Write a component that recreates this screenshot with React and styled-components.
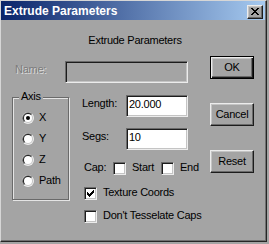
import React from "react";
import styled, { createGlobalStyle, css } from "styled-components";

const C = {
  face: "#a4a4a4",
  hi: "#ececec",
  light: "#c4c4c4",
  shadow: "#6a6a6a",
  dark: "#1c1c1c",
};

const GlobalStyle = createGlobalStyle`
  html, body { margin: 0; padding: 0; background: ${C.face}; }
  body {
    font-family: "Liberation Sans", Arial, sans-serif;
    font-size: 11px;
    letter-spacing: -0.25px;
    color: #000;
  }
  * { box-sizing: border-box; }
`;

const Window = styled.div`
  width: 267px;
  height: 242px;
  border: 1px solid;
  border-color: #d6d6d6 #262626 #262626 #d6d6d6;
  padding: 0 1px 1px 0;
  box-shadow: inset -1px -1px 0 #707070;
  background: ${C.face};
  display: flex;
  flex-direction: column;
`;

const TitleBar = styled.div`
  height: 19px;
  flex: none;
  display: flex;
  align-items: flex-start;
  padding-left: 3px;
  background: linear-gradient(to right, #0a246a, #a6caf0);
  color: #fff;
`;

const TitleText = styled.div`
  flex: 1;
  font-weight: bold;
  font-size: 12px;
  line-height: 20px;
  letter-spacing: 0;
  white-space: nowrap;
`;

const bevel = css`
  border: 1px solid;
  border-color: ${C.hi} ${C.dark} ${C.dark} ${C.hi};
  box-shadow: inset -1px -1px 0 ${C.shadow}, inset 1px 1px 0 ${C.light};
  background: ${C.face};
`;

const CloseButton = styled.div`
  ${bevel};
  width: 16px;
  height: 14px;
  margin-top: 4px;
  margin-right: 2px;
  display: flex;
  align-items: center;
  justify-content: center;
  padding-bottom: 1px;
`;

const Content = styled.div`
  flex: 1;
  padding-top: 14px;
`;

const Heading = styled.div`
  text-align: center;
  line-height: 13px;
  padding-left: 4px;
`;

const MainRow = styled.div`
  display: flex;
  align-items: flex-start;
  margin-top: 9px;
  padding-left: 11px;
`;

const LeftPart = styled.div`
  width: 176px;
  flex: none;
  display: flex;
  flex-direction: column;
`;

const NameRow = styled.div`
  display: flex;
  align-items: flex-start;
  margin-top: 5px;
`;

const NameLabel = styled.div`
  width: 53px;
  flex: none;
  padding: 2px 0 0 3px;
  line-height: 13px;
  color: #7c7c7c;
  text-shadow: 1px 1px 0 #dcdcdc;
`;

const Field = styled.div`
  width: ${(p) => p.$w}px;
  flex: none;
  height: 22px;
  border: 1px solid;
  border-color: ${C.shadow} ${C.hi} ${C.hi} ${C.shadow};
  box-shadow: inset 1px 1px 0 ${C.dark}, inset -1px -1px 0 ${C.light};
  background: ${(p) => (p.$disabled ? C.face : "#fff")};
  padding: 2px 0 0 2px;
  line-height: 13px;
  white-space: nowrap;
  overflow: hidden;
`;

const ButtonCol = styled.div`
  margin-left: 22px;
  width: 44px;
  flex: none;
  display: flex;
  flex-direction: column;
  gap: 24px;
`;

const Button = styled.div`
  width: 44px;
  height: 23px;
  display: flex;
  align-items: center;
  justify-content: center;
  padding-bottom: 1px;
  line-height: 13px;
  ${(p) =>
    p.$default
      ? css`
          border: 1px solid #000;
          background: ${C.face};
          box-shadow: inset 1px 1px 0 ${C.hi}, inset -1px -1px 0 ${C.dark},
            inset -2px -2px 0 ${C.shadow}, inset 2px 2px 0 ${C.light};
        `
      : bevel}
`;

const LowerRow = styled.div`
  display: flex;
  align-items: flex-start;
`;

const Group = styled.div`
  position: relative;
  flex: none;
  width: 57px;
  height: 103px;
  margin-top: 14px;
  border: 1px solid ${C.shadow};
  box-shadow: inset 1px 1px 0 #e4e4e4, 1px 1px 0 #e4e4e4;
  padding: 9px 0 0 9px;
`;

const Legend = styled.div`
  position: absolute;
  top: -8px;
  left: 6px;
  padding: 0 2px;
  background: ${C.face};
  line-height: 13px;
`;

const RadioRow = styled.div`
  display: flex;
  align-items: center;
  gap: 5px;
  height: 21px;
  line-height: 13px;
`;

const Fields = styled.div`
  flex: none;
  width: 106px;
  margin-left: 13px;
  margin-top: 12px;
  display: flex;
  flex-direction: column;
`;

const FieldRow = styled.div`
  display: flex;
  align-items: flex-start;
  margin-top: ${(p) => p.$mt || 0}px;
`;

const FieldLabel = styled.div`
  width: 44px;
  flex: none;
  padding-top: 2px;
  line-height: 13px;
`;

const CheckRow = styled.div`
  display: flex;
  align-items: center;
  height: 13px;
  padding-left: 2px;
  margin-top: ${(p) => p.$mt}px;
`;

const CheckText = styled.span`
  flex: none;
  line-height: 13px;
  margin-bottom: 2px;
  margin-left: ${(p) => p.$ml || 0}px;
  width: ${(p) => (p.$w ? `${p.$w}px` : "auto")};
  white-space: nowrap;
`;

const Box = styled.span`
  flex: none;
  width: 13px;
  height: 13px;
  border: 1px solid;
  border-color: ${C.shadow} ${C.hi} ${C.hi} ${C.shadow};
  box-shadow: inset 1px 1px 0 ${C.dark}, inset -1px -1px 0 ${C.light};
  background: #fff;
  display: flex;
  align-items: center;
  justify-content: center;
`;

function Checkbox({ checked }) {
  return (
    <Box>
      {checked && (
        <svg width="7" height="7" viewBox="0 0 7 7" shapeRendering="crispEdges">
          <path
            d="M6 0h1v1H6zM5 1h2v1H5zM0 2h1v1H0zM4 2h3v1H4zM0 3h2v1H0zM3 3h3v1H3zM0 4h5v1H0zM1 5h3v1H1zM2 6h1v1H2z"
            fill="#000"
          />
        </svg>
      )}
    </Box>
  );
}

function Radio({ checked }) {
  return (
    <svg width="12" height="12" viewBox="0 0 12 12" style={{ flex: "none" }}>
      <circle cx="6" cy="6" r="6" fill={C.hi} />
      <path d="M1.76 10.24 A6 6 0 0 1 10.24 1.76 Z" fill={C.shadow} />
      <circle cx="6" cy="6" r="5" fill={C.light} />
      <path d="M2.46 9.54 A5 5 0 0 1 9.54 2.46 Z" fill={C.dark} />
      <circle cx="6" cy="6" r="4" fill="#fff" />
      {checked && <circle cx="6" cy="6" r="2" fill="#000" />}
    </svg>
  );
}

function CloseGlyph() {
  return (
    <svg width="8" height="7" viewBox="0 0 8 7" shapeRendering="crispEdges">
      <path
        d="M0 0h2v1H0zM6 0h2v1H6zM1 1h2v1H1zM5 1h2v1H5zM2 2h4v1H2zM3 3h2v1H3zM2 4h4v1H2zM1 5h2v1H1zM5 5h2v1H5zM0 6h2v1H0zM6 6h2v1H6z"
        fill="#000"
      />
    </svg>
  );
}

const axes = ["X", "Y", "Z", "Path"];

export default function App() {
  return (
    <>
      <GlobalStyle />
      <Window>
        <TitleBar>
          <TitleText>Extrude Parameters</TitleText>
          <CloseButton>
            <CloseGlyph />
          </CloseButton>
        </TitleBar>
        <Content>
          <Heading>Extrude Parameters</Heading>
          <MainRow>
            <LeftPart>
              <NameRow>
                <NameLabel>Name:</NameLabel>
                <Field $w={123} $disabled />
              </NameRow>
              <LowerRow>
                <Group>
                  <Legend>Axis</Legend>
                  {axes.map((a, i) => (
                    <RadioRow key={a}>
                      <Radio checked={i === 0} />
                      <span>{a}</span>
                    </RadioRow>
                  ))}
                </Group>
                <Fields>
                  <FieldRow>
                    <FieldLabel>Length:</FieldLabel>
                    <Field $w={62}>20.000</Field>
                  </FieldRow>
                  <FieldRow $mt={11}>
                    <FieldLabel>Segs:</FieldLabel>
                    <Field $w={62}>10</Field>
                  </FieldRow>
                  <CheckRow $mt={12}>
                    <CheckText $w={29}>Cap:</CheckText>
                    <Checkbox />
                    <CheckText $ml={6} $w={29}>Start</CheckText>
                    <Checkbox />
                    <CheckText $ml={6}>End</CheckText>
                  </CheckRow>
                  <CheckRow $mt={12}>
                    <Checkbox checked />
                    <CheckText $ml={6}>Texture Coords</CheckText>
                  </CheckRow>
                  <CheckRow $mt={10}>
                    <Checkbox />
                    <CheckText $ml={6}>Don't Tesselate Caps</CheckText>
                  </CheckRow>
                </Fields>
              </LowerRow>
            </LeftPart>
            <ButtonCol>
              <Button $default>OK</Button>
              <Button>Cancel</Button>
              <Button>Reset</Button>
            </ButtonCol>
          </MainRow>
        </Content>
      </Window>
    </>
  );
}
